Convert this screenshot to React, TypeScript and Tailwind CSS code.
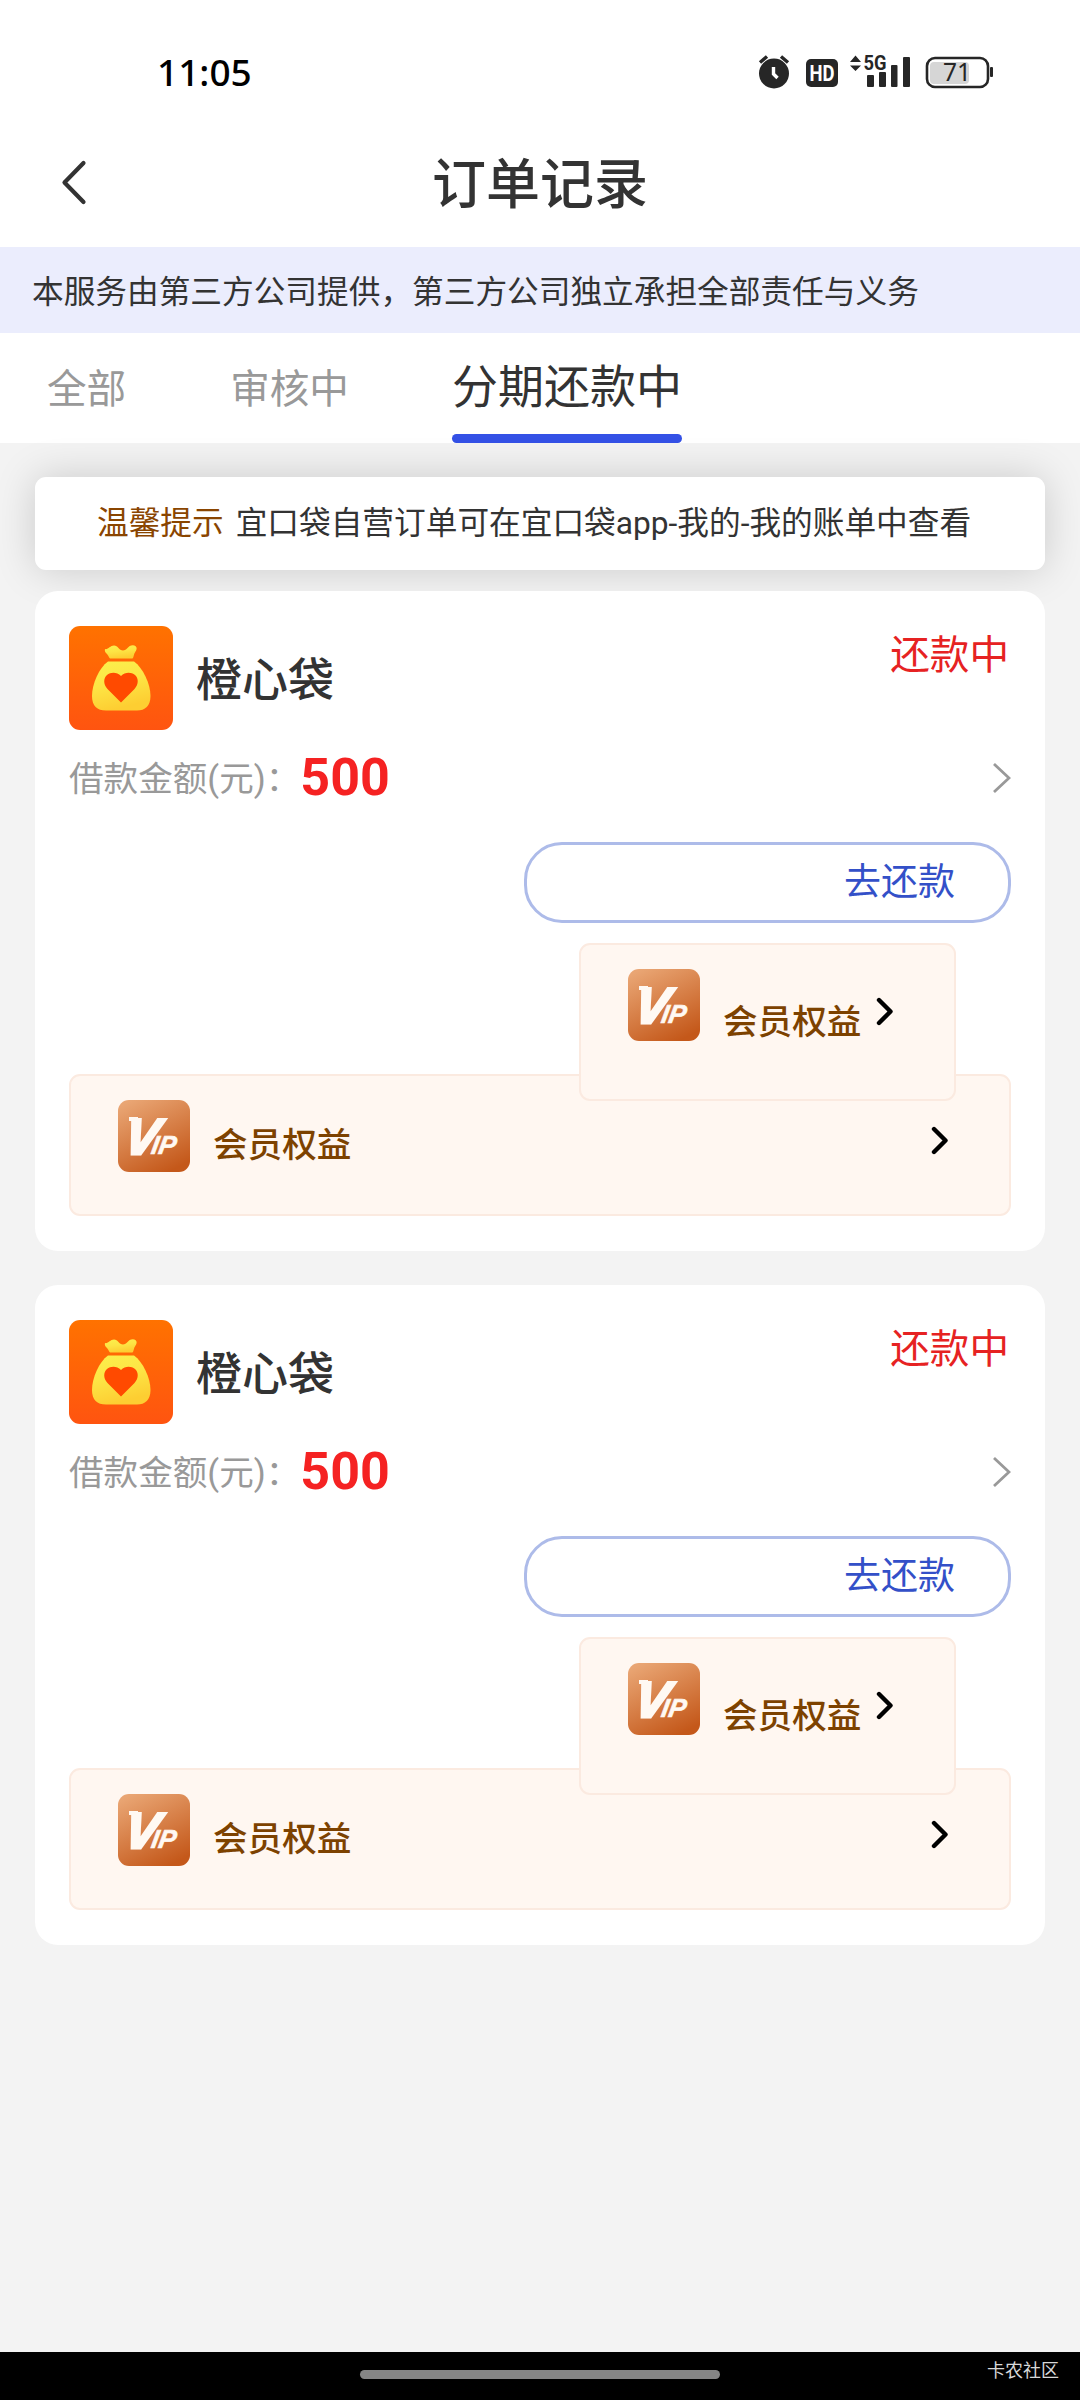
import clsx from "clsx";

type Order = {
  id: number;
  name: string;
  status: string;
  amount: string;
};

const orders: Order[] = [
  { id: 1, name: "橙心袋", status: "还款中", amount: "500" },
  { id: 2, name: "橙心袋", status: "还款中", amount: "500" },
];

function StatusIcons() {
  return (
    <svg width="236" height="36" viewBox="0 0 236 36" className="overflow-visible text-[#262626]" fill="currentColor">
      {/* alarm */}
      <circle cx="16" cy="19.5" r="15" />
      <path d="M2 8.5L9 2.5M30 8.5L23 2.5" stroke="currentColor" strokeWidth="3.4" />
      <path d="M15.5 13v7l4 4" stroke="#fff" strokeWidth="3.4" fill="none" />
      {/* HD */}
      <rect x="48" y="5" width="32" height="28" rx="5" />
      <text x="64" y="27" textAnchor="middle" fill="#fff" fontSize="22.500" fontWeight="700" textLength="25" lengthAdjust="spacingAndGlyphs" className="font-['Roboto',sans-serif]">HD</text>
      {/* network */}
      <path d="M92 8L97.500 1.500L103 8ZM92 11.500L97.500 17L103 11.500Z" />
      <text x="105.500" y="16" fontSize="21" fontWeight="700" textLength="23" lengthAdjust="spacingAndGlyphs" className="font-['Roboto',sans-serif]">5G</text>
      <rect x="109" y="21" width="7" height="12" rx="1" />
      <rect x="121" y="18" width="7" height="15" rx="1" />
      <rect x="133" y="11" width="6.500" height="22" rx="1" />
      <rect x="145" y="3" width="7" height="30" rx="1" />
      {/* battery */}
      <rect x="172" y="8" width="39" height="22" rx="4" fill="#d6d6d6" />
      <rect x="169" y="4" width="61" height="29" rx="8" fill="none" stroke="currentColor" strokeWidth="2.600" />
      <rect x="232" y="13" width="3" height="10" rx="1" />
      <text x="199" y="27" textAnchor="middle" fontSize="24.500" className="font-['Noto_Sans',sans-serif]">71</text>
    </svg>
  );
}

function Chevron({ className }: { className?: string }) {
  return (
    <svg width="18" height="29" viewBox="0 0 18 29" fill="none" stroke="currentColor" className={clsx("shrink-0", className)}>
      <path d="M3 3L14.500 14.500L3 26" strokeWidth="4.400" strokeLinecap="round" strokeLinejoin="round" />
    </svg>
  );
}

function BagLogo() {
  return (
    <svg width="104" height="104" viewBox="0 0 104 104" className="shrink-0">
      <defs>
        <linearGradient id="bagBg" x1="0" y1="0" x2="0" y2="1">
          <stop offset="0" stopColor="#ff7200" />
          <stop offset="1" stopColor="#ff5410" />
        </linearGradient>
        <linearGradient id="bagFill" x1="0" y1="0" x2="0.3" y2="1">
          <stop offset="0" stopColor="#fbf04c" />
          <stop offset="0.5" stopColor="#fde545" />
          <stop offset="1" stopColor="#fdce32" />
        </linearGradient>
      </defs>
      <rect width="104" height="104" rx="11" fill="url(#bagBg)" />
      <path d="M36 23C39 24 41 19.500 45 19.500C49 19.500 50 24.500 54 24.500C58 24.500 59 19 64 19.200C68 19.500 68.500 23 66.500 25.500C64.500 28 65 31 63.500 32.500H41C39.500 31 39.500 29.500 38 28C36 26 35.500 25 36 23Z" fill="url(#bagFill)" />
      <path d="M39 35.500H65C74 42 81.500 58 81.500 70C81.500 80 76 84.500 68 84.500H37C28 84.500 23 80 23 70C23 58 30 42 39 35.500Z" fill="url(#bagFill)" />
      <path d="M52 76.500L38.500 63C34 58 34.500 52 38 49C42 45.800 48 46 52 50C56 46 62 45.800 66 49C69.500 52 70 58 65.500 63Z" fill="#ff4a00" />
    </svg>
  );
}

function VipIcon() {
  return (
    <svg width="72" height="72" viewBox="0 0 72 72" className="shrink-0">
      <defs>
        <linearGradient id="vipBg" x1="0.2" y1="0" x2="0.7" y2="1">
          <stop offset="0" stopColor="#e9a573" />
          <stop offset="1" stopColor="#c4581a" />
        </linearGradient>
      </defs>
      <rect width="72" height="72" rx="11" fill="url(#vipBg)" />
      <rect x="11" y="17" width="9" height="4" fill="#fff9f3" />
      <text
        transform="translate(4.500 53.500) skewX(-10)"
        fill="#fff9f3"
        stroke="#fff9f3"
        fontSize="50"
        fontWeight="700"
        fontStyle="italic"
        strokeWidth="3"
        className="font-['Liberation_Sans',Arial,sans-serif]"
      >
        V<tspan dx="-5.500" fontSize="26" strokeWidth="0.600">IP</tspan>
      </text>
    </svg>
  );
}

function VipBox({ compact }: { compact?: boolean }) {
  return (
    <div
      className={clsx(
        "flex items-start rounded-[11px] border-2 border-[#fbeae0] bg-[#fff7f1] pl-[47px] pt-6",
        compact ? "relative z-10 mr-[55px] mt-5 h-[158px] w-[377px] self-end" : "-mt-[27px] h-[142px] w-full pr-[60px]"
      )}
    >
      <VipIcon />
      <span
        className={clsx(
          "ml-[23px] whitespace-nowrap text-[34.600px] font-medium leading-10 text-[#7d4200]",
          compact ? "mt-[33px]" : "mt-[25px]"
        )}
      >
        会员权益
      </span>
      <Chevron className={compact ? "ml-[15px] mt-7 text-black" : "ml-auto mt-[26px] text-black"} />
    </div>
  );
}

function OrderCard({ order }: { order: Order }) {
  return (
    <div className="flex h-[660px] flex-col rounded-[23px] bg-white px-[34px] pt-[35px]">
      <div className="flex h-[104px] items-center">
        <BagLogo />
        <span className="ml-[23px] mt-[3px] text-[46px] font-medium leading-[60px] text-[#333]">{order.name}</span>
        <span className="ml-auto mr-[2px] mt-[2px] self-start text-[39.600px] leading-[56px] text-[#e62222]">{order.status}</span>
      </div>

      <div className="flex h-[95px] items-center">
        <span className="mt-[2px] text-[34.600px] leading-[44px] text-[#999]">借款金额(元)：</span>
        <span className="text-[52px] font-bold leading-[60px] text-[#f52222]">{order.amount}</span>
        <svg width="20" height="32" viewBox="0 0 20 32" fill="none" className="ml-auto">
          <path d="M3 2L18 16L3 30" stroke="#999" strokeWidth="2.800" />
        </svg>
      </div>

      <button className="mt-[17px] flex h-[81px] w-[487px] items-center justify-end self-end rounded-[38px] border-3 border-[#adbbe9] pr-[53px] text-[37px] leading-[50px] text-[#3350c8]">
        去还款
      </button>

      <VipBox compact />
      <VipBox />
    </div>
  );
}

export default function App() {
  return (
    <div className="flex h-[2400px] w-[1080px] flex-col overflow-hidden bg-[#f3f3f3] font-['Roboto','Noto_Sans_CJK_SC',sans-serif]">
      {/* Status bar */}
      <div className="flex h-[120px] items-center justify-between bg-white pl-[157px] pr-[86px] pt-6">
        <span className="font-['Noto_Sans',sans-serif] text-[37px] font-medium leading-10 text-black">11:05</span>
        <StatusIcons />
      </div>

      {/* Header */}
      <div className="grid h-[127px] grid-cols-3 items-center bg-white px-[60px]">
        <svg width="28" height="48" viewBox="0 0 28 48" fill="none">
          <path d="M23.500 3L4.500 22.500L23.500 42" stroke="#333" strokeWidth="4.200" strokeLinecap="round" strokeLinejoin="round" />
        </svg>
        <h1 className="mt-1 text-center text-[54px] font-medium leading-[70px] text-[#333]">订单记录</h1>
      </div>

      {/* Notice */}
      <div className="flex h-[86px] items-center bg-[#ebedfd] pl-8 pt-[6px] text-[31.680px] leading-[44px] text-[#333]">
        本服务由第三方公司提供，第三方公司独立承担全部责任与义务
      </div>

      {/* Tabs */}
      <div className="flex h-[110px] bg-white pl-[47px] text-[39.600px] leading-[60px] text-[#999]">
        <span className="mt-[27px]">全部</span>
        <span className="ml-[104px] mt-[27px]">审核中</span>
        <div className="ml-[103px] flex flex-col justify-between">
          <span className="mt-6 text-[46px] text-[#333]">分期还款中</span>
          <div className="h-[9px] rounded-full bg-[#3451e6]" />
        </div>
      </div>

      <div className="flex flex-col px-[35px] pt-[34px]">
        <div className="flex h-[93px] items-center whitespace-nowrap rounded-[11px] bg-white pl-[62px] text-[31.680px] text-[#333] shadow-[0_0_40px_rgba(0,0,0,0.17)]">
          <span className="mr-3 text-[#8a4500]">温馨提示</span>
          宜口袋自营订单可在宜口袋app-我的-我的账单中查看
        </div>
        <div className="relative mt-[21px] flex flex-col gap-[34.400px]">
          {orders.map((order) => (
            <OrderCard key={order.id} order={order} />
          ))}
        </div>
      </div>

      {/* Gesture bar */}
      <div className="mt-auto grid h-12 grid-cols-3 items-start bg-black">
        <div className="col-start-2 mt-[18px] h-[9px] rounded-full bg-[#858585]" />
        <span className="mr-[21px] mt-[7px] text-right text-[18px] leading-6 text-[#d8d8d8]">卡农社区</span>
      </div>
    </div>
  );
}
